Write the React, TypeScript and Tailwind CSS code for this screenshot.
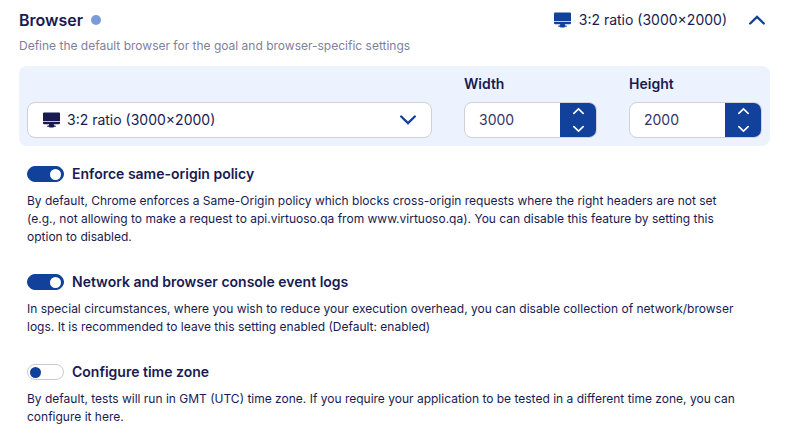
import React, { useState } from 'react';

type IconProps = { className?: string };

const MonitorIcon: React.FC<IconProps> = ({ className }) => (
  <svg viewBox="0 0 17 16" className={className} fill="currentColor" aria-hidden="true">
    <path d="M1 0.500h15a1 1 0 0 1 1 1V9.200H0V1.500a1 1 0 0 1 1-1Z" />
    <path d="M0 10h17v1a1.200 1.200 0 0 1-1.200 1.200H10.700L11.200 13.500H12a0.900 0.900 0 0 1 0.900 0.900v0.300H11L10.500 15.500h-4L6 14.700H4.100v-0.300a0.900 0.900 0 0 1 0.900-0.900h0.800L6.300 12.200H1.200A1.200 1.200 0 0 1 0 11Z" />
  </svg>
);

const Chevron: React.FC<IconProps & { direction: 'up' | 'down' }> = ({ className, direction }) => (
  <svg
    viewBox="0 0 16 10"
    className={className}
    fill="none"
    stroke="currentColor"
    strokeWidth="2.3"
    strokeLinecap="round"
    aria-hidden="true"
  >
    <path d={direction === 'up' ? 'M1.200 8.500 8 1.900l6.800 6.600' : 'M1.200 1.500 8 8.100l6.800-6.600'} />
  </svg>
);

const ratios = [
  { label: '3:2 ratio (3000×2000)', width: 3000, height: 2000 },
  { label: '16:9 ratio (1920×1080)', width: 1920, height: 1080 },
  { label: '4:3 ratio (1024×768)', width: 1024, height: 768 }
];

const initialSettings = [
  {
    id: 'same-origin',
    title: 'Enforce same-origin policy',
    description:
      'By default, Chrome enforces a Same-Origin policy which blocks cross-origin requests where the right headers are not set (e.g., not allowing to make a request to api.virtuoso.qa from www.virtuoso.qa). You can disable this feature by setting this option to disabled.',
    enabled: true
  },
  {
    id: 'event-logs',
    title: 'Network and browser console event logs',
    description:
      'In special circumstances, where you wish to reduce your execution overhead, you can disable collection of network/browser logs. It is recommended to leave this setting enabled (Default: enabled)',
    enabled: true
  },
  {
    id: 'time-zone',
    title: 'Configure time zone',
    description:
      'By default, tests will run in GMT (UTC) time zone. If you require your application to be tested in a different time zone, you can configure it here.',
    enabled: false
  }
];

type NumberFieldProps = {
  id: string;
  label: string;
  value: number;
  onChange: (value: number) => void;
};

const NumberField: React.FC<NumberFieldProps> = ({ id, label, value, onChange }) => (
  <div className="w-[133px] shrink-0">
    <label htmlFor={id} className="block text-sm leading-5 font-semibold">
      {label}
    </label>
    <div className="mt-2 flex h-9 overflow-hidden rounded-lg border border-[#cfd0d8] bg-white">
      <input
        id={id}
        type="text"
        inputMode="numeric"
        className="min-w-0 flex-1 pl-3.5 text-sm text-[#33346a] outline-none"
        value={value}
        onChange={(e) => onChange(Number(e.target.value) || 0)}
      />
      <div className="-my-px -mr-px flex w-[37px] flex-col bg-[#11419b] text-white">
        <button
          type="button"
          aria-label={`Increase ${label}`}
          className="flex flex-1 items-center justify-center"
          onClick={() => onChange(value + 1)}
        >
          <Chevron direction="up" className="h-2 w-[11px]" />
        </button>
        <button
          type="button"
          aria-label={`Decrease ${label}`}
          className="flex flex-1 items-center justify-center"
          onClick={() => onChange(value - 1)}
        >
          <Chevron direction="down" className="h-2 w-[11px]" />
        </button>
      </div>
    </div>
  </div>
);

const App: React.FC = () => {
  const [open, setOpen] = useState(true);
  const [ratio, setRatio] = useState(ratios[0].label);
  const [width, setWidth] = useState(3000);
  const [height, setHeight] = useState(2000);
  const [settings, setSettings] = useState(initialSettings);

  const handleRatio = (label: string) => {
    const next = ratios.find((r) => r.label === label);
    if (!next) return;
    setRatio(label);
    setWidth(next.width);
    setHeight(next.height);
  };

  const toggleSetting = (id: string) => {
    setSettings(settings.map((s) => (s.id === id ? { ...s, enabled: !s.enabled } : s)));
  };

  return (
    <div className="bg-white px-[19px] pt-2 font-['Inter',sans-serif] text-[#191a52]">
      <header className="flex items-center">
        <h2 className="text-base leading-6 font-semibold">Browser</h2>
        <span className="ml-2 size-2.5 rounded-full bg-[#7b9ad8]" />
        <div className="ml-auto flex items-center gap-2 text-sm">
          <MonitorIcon className="h-4 w-[17px] text-[#11419b]" />
          <span>{ratio}</span>
        </div>
        <button
          type="button"
          aria-label="Toggle browser settings"
          aria-expanded={open}
          className="mr-[5px] ml-[22px] text-[#11419b]"
          onClick={() => setOpen(!open)}
        >
          <Chevron direction={open ? 'up' : 'down'} className="h-2.5 w-4" />
        </button>
      </header>
      <p className="mt-1 text-xs leading-5 text-[#7f7f9d]">
        Define the default browser for the goal and browser-specific settings
      </p>

      {open && (
        <>
          <div className="mt-2.5 flex items-end gap-8 rounded-lg bg-[#ecf2fe] p-2">
            <div className="relative min-w-0 flex-1">
              <select
                aria-label="Screen size"
                className="block h-9 w-full appearance-none rounded-lg border border-[#cfd0d8] bg-white pr-10 pl-[39px] text-sm outline-none"
                value={ratio}
                onChange={(e) => handleRatio(e.target.value)}
              >
                {ratios.map((r) => (
                  <option key={r.label}>{r.label}</option>
                ))}
              </select>
              <div className="pointer-events-none absolute inset-0 flex items-center justify-between px-4">
                <MonitorIcon className="h-4 w-[17px]" />
                <Chevron direction="down" className="h-2.5 w-4 text-[#11419b]" />
              </div>
            </div>
            <NumberField id="width" label="Width" value={width} onChange={setWidth} />
            <NumberField id="height" label="Height" value={height} onChange={setHeight} />
          </div>

          <div className="mt-4 space-y-6 px-2 pb-4">
            {settings.map((setting) => (
              <section key={setting.id}>
                <label className="flex items-center gap-2 text-sm leading-6 font-semibold">
                  <input
                    type="checkbox"
                    role="switch"
                    className="flex h-4 w-[37px] appearance-none items-center rounded-full border border-[#c9cad6] bg-white px-0.5 before:size-[11px] before:rounded-full before:bg-[#11419b] checked:justify-end checked:border-[#11419b] checked:bg-[#11419b] checked:before:bg-white"
                    checked={setting.enabled}
                    onChange={() => toggleSetting(setting.id)}
                  />
                  {setting.title}
                </label>
                <p className="mt-1.5 pr-4 text-xs leading-[18px]">{setting.description}</p>
              </section>
            ))}
          </div>
        </>
      )}
    </div>
  );
};

export default App;
